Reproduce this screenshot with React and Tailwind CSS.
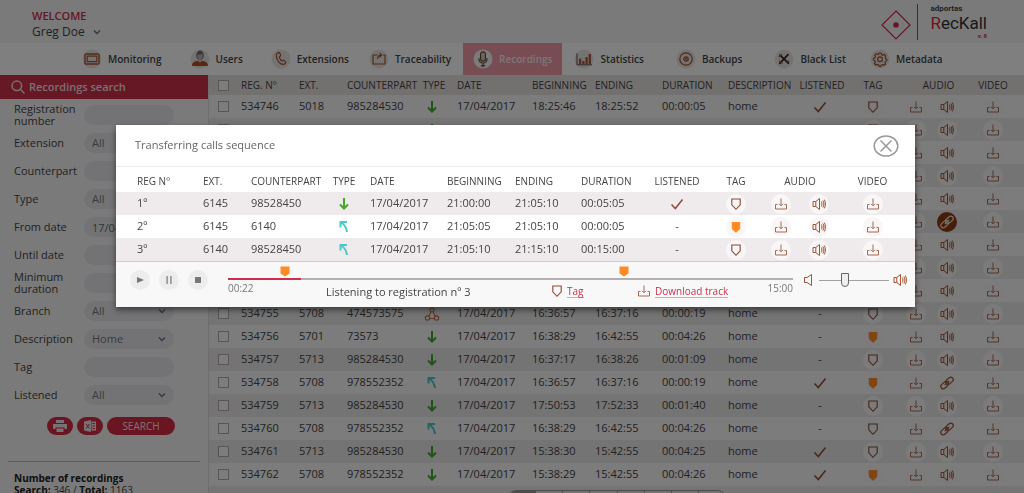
import React, { useState } from 'react';

const navItems = [
  { label: 'Monitoring', icon: 'monitor', space: '' },
  { label: 'Users', icon: 'user', space: 'ml-7' },
  { label: 'Extensions', icon: 'phone', space: 'ml-7' },
  { label: 'Traceability', icon: 'trace', space: 'ml-5' },
  { label: 'Recordings', icon: 'mic', space: 'ml-3', active: true },
  { label: 'Statistics', icon: 'stats', space: 'ml-3' },
  { label: 'Backups', icon: 'disc', space: 'ml-8' },
  { label: 'Black List', icon: 'blacklist', space: 'ml-8' },
  { label: 'Metadata', icon: 'gear', space: 'ml-6' },
];

const filters = [
  { id: 'registration', label: 'Registration number', type: 'text' },
  { id: 'extension', label: 'Extension', type: 'select', value: 'All' },
  { id: 'counterpart', label: 'Counterpart', type: 'text' },
  { id: 'type', label: 'Type', type: 'select', value: 'All' },
  { id: 'from', label: 'From date', type: 'text', value: '17/04/2017' },
  { id: 'until', label: 'Until date', type: 'text' },
  { id: 'duration', label: 'Minimum duration', type: 'text' },
  { id: 'branch', label: 'Branch', type: 'select', value: 'All' },
  { id: 'description', label: 'Description', type: 'select', value: 'Home' },
  { id: 'tag', label: 'Tag', type: 'text' },
  { id: 'listened', label: 'Listened', type: 'select', value: 'All' },
];

// reg, ext, counterpart, type, beginning, ending, duration, listened, tagged, audio
const recordings = [
  ['534746', '5018', '985284530', 'in', '18:25:46', '18:25:52', '00:00:05', true, false, 'speaker'],
  ['534747', '5708', '978552352', 'in', '16:36:57', '16:37:16', '00:00:19', false, false, 'speaker'],
  ['534748', '5713', '985284530', 'in', '17:50:53', '17:52:33', '00:01:40', false, false, 'speaker'],
  ['534749', '5708', '978552352', 'out', '16:38:29', '16:42:55', '00:04:26', false, false, 'speaker'],
  ['534750', '5713', '985284530', 'in', '15:38:30', '15:42:55', '00:04:25', false, false, 'speaker'],
  ['534751', '6145', '98528450', 'out', '21:00:00', '21:05:10', '00:05:05', true, false, 'active'],
  ['534752', '5701', '73573', 'in', '16:38:29', '16:42:55', '00:04:26', false, false, 'speaker'],
  ['534753', '5713', '985284530', 'in', '16:37:17', '16:38:26', '00:01:09', false, false, 'speaker'],
  ['534754', '5708', '978552352', 'out', '16:36:57', '16:37:16', '00:00:19', false, false, 'speaker'],
  ['534755', '5708', '474573575', 'group', '16:36:57', '16:37:16', '00:00:19', false, false, 'speaker'],
  ['534756', '5701', '73573', 'in', '16:38:29', '16:42:55', '00:04:26', false, true, 'speaker'],
  ['534757', '5713', '985284530', 'in', '16:37:17', '16:38:26', '00:01:09', false, false, 'speaker'],
  ['534758', '5708', '978552352', 'out', '16:36:57', '16:37:16', '00:00:19', true, true, 'link'],
  ['534759', '5713', '985284530', 'in', '17:50:53', '17:52:33', '00:01:40', false, false, 'speaker'],
  ['534760', '5708', '978552352', 'out', '16:38:29', '16:42:55', '00:04:26', false, false, 'link'],
  ['534761', '5713', '985284530', 'in', '15:38:30', '15:42:55', '00:04:25', true, false, 'speaker'],
  ['534762', '5708', '978552352', 'in', '15:38:29', '15:42:55', '00:04:26', true, true, 'speaker'],
];

const calls = [
  ['1º', '6145', '98528450', 'in', '21:00:00', '21:05:10', '00:05:05', true, false],
  ['2º', '6145', '6140', 'out', '21:05:05', '21:05:10', '00:00:05', false, true],
  ['3º', '6140', '98528450', 'out', '21:05:10', '21:15:10', '00:15:00', false, false],
];

const markers = [10, 70];

/* ---------- icons ---------- */

const NavIcon = ({ name }) => {
  const line = { fill: 'none', stroke: '#a4532f', strokeWidth: 1.2, strokeLinejoin: 'round', strokeLinecap: 'round' };
  return (
    <svg viewBox="0 0 20 20" className="h-5 w-5 shrink-0" aria-hidden="true">
      <circle cx="10" cy="10" r="9.5" fill={name === 'mic' ? '#f7f7f7' : '#ebe7e4'} />
      {name === 'monitor' && (
        <g {...line}>
          <rect x="3" y="5" width="14" height="10" rx="1" strokeWidth="1.4" />
          <rect x="5.2" y="7.2" width="9.6" height="5.4" />
        </g>
      )}
      {name === 'user' && (
        <g>
          <ellipse cx="10" cy="6.5" rx="3.8" ry="5" fill="#6f6e70" />
          <path d="M7.4 5.4c2 .6 4-.2 5.2-.8v3.6c0 2-1.2 3.2-2.6 3.2s-2.6-1.200-2.600-3.200z" fill="#b9b2ae" />
          <path d="M2 17c0-3.400 2.400-4.800 6-5.200l2 1.600 2-1.600c3.600.4 6 1.800 6 5.200z" fill="#b5501f" />
        </g>
      )}
      {name === 'phone' && (
        <path
          {...line}
          d="M6.300 4.300l1.500-.7c.5-.2.800 0 1 .5l.8 2c.2.5 0 .8-.4 1.100l-.9.7c.3 1.800 1.300 3.200 2.700 4.100l1-.6c.5-.3.9-.2 1.200.2l1.300 1.600c.3.4.3.8-.1 1.100l-1.200 1C9.600 16.200 5.200 11.500 5.300 6.200c0-.9.300-1.500 1-1.900z"
        />
      )}
      {name === 'trace' && (
        <g {...line}>
          <path d="M8 6H4v9h12V6h-1.500" />
          <path d="M8.500 9.500c.3-2.200 1.800-3.300 4-3.400M11 4.300l1.800 1.800L11 7.900" />
        </g>
      )}
      {name === 'mic' && (
        <g {...line} stroke="#6d4c35">
          <rect x="7.600" y="2.800" width="4.800" height="9.400" rx="2.400" fill="#d8d0c0" />
          <path d="M6 9.500c0 3 1.600 4.500 4 4.500s4-1.500 4-4.500M10 14v3" />
          <path d="M8.500 16.800h3" strokeWidth="1.600" />
        </g>
      )}
      {name === 'stats' && (
        <g stroke="#a4532f">
          <path d="M3 4.500v11.300h15" fill="none" stroke="#5b4a46" />
          <path d="M6.200 15V9.500M9.400 15v-3M12.600 15V8M15.800 15V5" strokeWidth="2.200" />
        </g>
      )}
      {name === 'disc' && (
        <g {...line}>
          <circle cx="10" cy="10" r="6.200" />
          <circle cx="10" cy="10" r="2.200" />
          <circle cx="10" cy="10" r=".5" />
        </g>
      )}
      {name === 'blacklist' && (
        <g fill="none" stroke="#2f2b2a" strokeLinecap="round">
          <path d="M6 6.200l8.300 8M14 5.600L5.800 14.400" strokeWidth="1.800" />
          <path d="M5.300 7.600l2.500-1.800M12.800 12.200l2 .3M5.600 12.200l2.500 1.800" stroke="#a4532f" strokeWidth="1.300" />
        </g>
      )}
      {name === 'gear' && (
        <g {...line}>
          <path d="M8.800 4h2.400l.4 1.600 1.300.6 1.500-.8 1.500 1.700-.7 1.400.4 1.200 1.300.5v1.600l-1.500.5-.5 1.200.7 1.500-1.700 1.300-1.300-.8-1.200.5-.5 1.300H9.200l-.6-1.400-1.200-.5-1.500.7-1.400-1.600.8-1.400-.5-1.200L3.500 11V9.300l1.400-.5.5-1.200-.7-1.400 1.600-1.400 1.400.8 1-.4z" />
          <circle cx="10" cy="10.200" r="2.400" />
        </g>
      )}
    </svg>
  );
};

const DownloadIcon = () => (
  <svg viewBox="0 0 14 14" className="h-3.5 w-3.5 shrink-0" fill="none" stroke="#a86a55" strokeWidth="1" aria-hidden="true">
    <path d="M3.500 7.500H1.500v4.500h11V7.500h-2M7 1.500v7M5 6.800l2 2 2-2" />
  </svg>
);

const SpeakerIcon = ({ muted }) => (
  <svg viewBox="0 0 14 14" className="h-3.5 w-3.5 shrink-0" fill="none" stroke="#a4532f" strokeWidth="1" aria-hidden="true">
    {muted ? (
      <path d="M3.500 4.500h2.500L10.500 1.500v11L6 9.500H3.500z" />
    ) : (
      <path d="M1 4.500h2.800L7.500 1.500v11L3.800 9.500H1zM3.800 4.500v5M9.300 4.500c.9 1.500.9 3.500 0 5M10.900 3.500c1.300 2.200 1.300 4.800 0 7M12.400 2.600c1.300 2.600 1.300 6.200 0 8.800" />
    )}
  </svg>
);

const LinkIcon = ({ color }) => (
  <svg viewBox="0 0 14 14" className="h-3.5 w-3.5 shrink-0" fill="none" stroke={color} strokeWidth="1.200" aria-hidden="true">
    <g transform="rotate(-42 7 7)">
      <rect x="-.5" y="4.600" width="8.500" height="4.800" rx="2.400" />
      <rect x="6" y="4.600" width="8.500" height="4.800" rx="2.400" />
      <path d="M4 7h6" />
    </g>
  </svg>
);

const TagIcon = ({ filled }) => (
  <svg
    viewBox="0 0 12 14"
    className="h-3.5 w-3 shrink-0"
    fill={filled ? '#ff8a24' : 'none'}
    stroke={filled ? '#ff8a24' : '#8e4634'}
    strokeWidth="1.100"
    aria-hidden="true"
  >
    {filled ? (
      <path d="M2.300 2.500h7.400v5.600c0 1.500-2.500 2.500-3.700 4-1.200-1.500-3.700-2.500-3.700-4z" />
    ) : (
      <path d="M1.800 2h8.400v5.800L6 12.300 1.800 7.800z" />
    )}
  </svg>
);

const TypeIcon = ({ type }) => (
  <svg viewBox="0 0 16 16" className="mx-auto h-4 w-4" fill="none" aria-hidden="true">
    {type === 'in' && <path d="M8 2v10.500M4 8.500l4 4 4-4" stroke="#47a42c" strokeWidth="2" />}
    {type === 'out' && (
      <path d="M4.500 8.500V3h6.500M5 3.500c3.500 2 5.500 5.500 6 9.500" stroke="#4cc8c8" strokeWidth="2" />
    )}
    {type === 'group' && (
      <g stroke="#c2714a" strokeWidth="1.200">
        <circle cx="8" cy="4" r="2" />
        <circle cx="3.500" cy="12" r="2.200" />
        <circle cx="12.500" cy="12" r="2.200" />
        <path d="M7 6l-2.500 4.200M9 6l2.500 4.200M5.700 12.500h4.600" />
      </g>
    )}
  </svg>
);

const CheckIcon = () => (
  <svg viewBox="0 0 14 14" className="mx-auto h-3.5 w-3.5" fill="none" stroke="#94483a" strokeWidth="1.500" aria-label="Yes">
    <path d="M1.500 7.500l3.800 4L12.500 2.500" />
  </svg>
);

const Chevron = ({ className }) => (
  <svg viewBox="0 0 8 8" className={className} fill="none" stroke="#5d7184" strokeWidth="1.300" aria-hidden="true">
    <path d="M1 2.500l3 3 3-3" />
  </svg>
);

const IconButton = ({ label, children, active }) => (
  <button
    type="button"
    aria-label={label}
    className={`mx-auto flex h-5 w-5 items-center justify-center rounded-full ${active ? 'bg-[#8c3a12]' : 'bg-[#f8f6f6]'}`}
  >
    {children}
  </button>
);

/* ---------- page ---------- */

const Header = () => (
  <header className="flex h-[43px] items-center justify-between bg-[#f4f4f4] pr-[37px] pl-8">
    <div className="pt-1">
      <p className="text-[11px] leading-4 font-semibold text-[#c9304a]">WELCOME</p>
      <button type="button" className="flex items-center gap-2 text-[12px] leading-4 text-[#444]">
        Greg Doe <Chevron className="h-2 w-2" />
      </button>
    </div>
    <div className="flex items-center">
      <svg viewBox="0 0 30 30" className="mt-1.5 h-[30px] w-[30px]" aria-hidden="true">
        <path d="M15 1l14 14-14 14L1 15z" fill="none" stroke="#cf2d4b" strokeWidth="1.200" />
        <circle cx="15" cy="15" r="2.800" fill="#cf2d4b" />
      </svg>
      <div className="ml-1.5 h-9 border-l border-[#cf2d4b]" />
      <div className="ml-3 flex flex-col font-['Roboto',sans-serif]">
        <span className="text-[8px] leading-[8px] font-bold text-[#444]">adportas</span>
        <span className="text-[17px] leading-5 text-[#333]">
          <span className="text-[#e02545]">R</span>ecKall
        </span>
        <span className="text-right text-[6px] leading-[6px] font-bold text-[#cf2d4b]">v. 8</span>
      </div>
    </div>
  </header>
);

const Nav = () => (
  <nav className="flex h-8 items-stretch bg-white pl-[82px]">
    {navItems.map((item) => (
      <a
        key={item.label}
        href="#"
        className={`flex items-center gap-1.5 text-[10px] font-semibold whitespace-nowrap ${item.space} ${
          item.active ? 'bg-[#ef9ba6] px-2.5 text-[#fbeaec]' : 'text-[#444]'
        }`}
      >
        <NavIcon name={item.icon} />
        {item.label}
      </a>
    ))}
  </nav>
);

const Sidebar = () => (
  <aside className="w-[209px] shrink-0 border-r border-[#dcdcdc] bg-[#f4f4f4]">
    <h2 className="flex h-6 items-center gap-1 bg-[#cc3349] pl-[11px] text-[11px] font-semibold text-[#f6dfe2]">
      <svg viewBox="0 0 14 14" className="h-3.5 w-3.5" fill="none" stroke="#f6dfe2" strokeWidth="1.500" aria-hidden="true">
        <circle cx="5.800" cy="5.800" r="4.800" />
        <path d="M9.300 9.300l4.200 4.200" />
      </svg>
      Recordings search
    </h2>
    <form className="pt-0.5" onSubmit={(e) => e.preventDefault()}>
      {filters.map((f) => (
        <div key={f.id} className="flex h-7 items-center pl-3.5">
          <label htmlFor={f.id} className="w-[70px] shrink-0 text-[11px] leading-3 text-[#444]">
            {f.label}
          </label>
          {f.type === 'select' ? (
            <div className="relative">
              <select
                id={f.id}
                defaultValue={f.value}
                className="block h-5 w-[90px] appearance-none rounded-full bg-[#e6e7eb] pl-2 text-[11px] text-[#777]"
              >
                <option>{f.value}</option>
              </select>
              <Chevron className="pointer-events-none absolute top-1.5 right-2 h-2 w-2" />
            </div>
          ) : (
            <input
              id={f.id}
              type="text"
              defaultValue={f.value}
              className="h-5 w-[90px] rounded-full bg-[#e6e7eb] px-2 text-[11px] text-[#666]"
            />
          )}
        </div>
      ))}
      <div className="mt-2 flex gap-1 pl-[47px]">
        <button type="button" aria-label="Print" className="flex h-[18px] w-[26px] items-center justify-center rounded-full bg-[#d42a44]">
          <svg viewBox="0 0 14 12" className="h-3 w-3.5" fill="#f3e3e5" aria-hidden="true">
            <path d="M3 0h8v3H3zM0 4h14v5h-2.500V7.500h-9V9H0zM3.500 8.500h7V12h-7z" />
          </svg>
        </button>
        <button type="button" aria-label="Export to Excel" className="flex h-[18px] w-[26px] items-center justify-center rounded-full bg-[#d42a44]">
          <svg viewBox="0 0 14 12" className="h-3 w-3.5" aria-hidden="true">
            <path d="M1 1.500L8 0v12l-7-1.500zM8.500 1.500H13v9H8.500z" fill="#f3e3e5" />
            <path d="M3 4l3.500 4.500M6.500 4L3 8.500M9.500 3.500H12M9.500 6H12M9.500 8.500H12" stroke="#d42a44" />
          </svg>
        </button>
        <button type="submit" className="h-[18px] w-[68px] rounded-full bg-[#d42a44] text-[10px] text-[#f6e4e6]">
          SEARCH
        </button>
      </div>
    </form>
    <div className="mx-2 mt-[26px] border-t border-[#b5b5b5] px-1.5 pt-2.5 text-[10px] leading-3 text-[#444]">
      <p className="font-bold text-[#222]">Number of recordings</p>
      <p>
        <b className="text-[#222]">Search:</b> 346 / <b className="text-[#222]">Total:</b> 1163
      </p>
    </div>
  </aside>
);

const Checkbox = ({ label }) => (
  <input type="checkbox" aria-label={label} className="ml-[9px] block h-[11px] w-[11px] appearance-none border border-[#b5a9a9] bg-[#fafafa]" />
);

const RecordingsTable = () => (
  <main className="min-w-0 flex-1 bg-[#ebe8e8]">
    <table className="w-full table-fixed text-left text-[11px] whitespace-nowrap text-[#444]">
      <colgroup>
        <col className="w-[32px]" />
        <col className="w-[58px]" />
        <col className="w-[48px]" />
        <col className="w-[68px]" />
        <col className="w-[34px]" />
        <col className="w-[83px]" />
        <col className="w-[63px]" />
        <col className="w-[67px]" />
        <col className="w-[66px]" />
        <col className="w-[65px]" />
        <col className="w-[54px]" />
        <col className="w-[52px]" />
        <col className="w-[33px]" />
        <col className="w-[30px]" />
        <col className="w-[62px]" />
      </colgroup>
      <thead>
        <tr className="h-5 bg-[#e6e0e1] text-[10px]">
          <th><Checkbox label="Select all" /></th>
          <th className="font-medium">REG. Nº</th>
          <th className="font-medium">EXT.</th>
          <th className="font-medium">COUNTERPART</th>
          <th className="pl-1 text-center font-medium">TYPE</th>
          <th className="pl-2 font-medium">DATE</th>
          <th className="font-medium">BEGINNING</th>
          <th className="font-medium">ENDING</th>
          <th className="font-medium">DURATION</th>
          <th className="font-medium">DESCRIPTION</th>
          <th className="pl-1 text-center font-medium">LISTENED</th>
          <th className="text-center font-medium">TAG</th>
          <th colSpan={2} className="pl-4 text-center font-medium">AUDIO</th>
          <th className="text-center font-medium">VIDEO</th>
        </tr>
      </thead>
      <tbody>
        {recordings.map(([reg, ext, counterpart, type, beginning, ending, duration, listened, tagged, audio]) => (
          <tr key={reg} className="h-[23px] odd:bg-[#f8f8f8] even:bg-[#ebe8e8]">
            <td><Checkbox label={`Select ${reg}`} /></td>
            <td>{reg}</td>
            <td>{ext}</td>
            <td>{counterpart}</td>
            <td><TypeIcon type={type} /></td>
            <td className="pl-2">17/04/2017</td>
            <td>{beginning}</td>
            <td>{ending}</td>
            <td>{duration}</td>
            <td>home</td>
            <td className="text-center">{listened ? <CheckIcon /> : '-'}</td>
            <td><IconButton label="Tag"><TagIcon filled={tagged} /></IconButton></td>
            <td><IconButton label="Download audio"><DownloadIcon /></IconButton></td>
            <td>
              <IconButton label="Listen" active={audio === 'active'}>
                {audio === 'speaker' ? <SpeakerIcon /> : <LinkIcon color={audio === 'active' ? '#f0e0d0' : '#9a5238'} />}
              </IconButton>
            </td>
            <td><IconButton label="Download video"><DownloadIcon /></IconButton></td>
          </tr>
        ))}
      </tbody>
    </table>
    <div className="mt-1 ml-[299px] flex w-[218px] overflow-hidden rounded-lg border border-[#999]">
      {[1, 2, 3, 4, 5, 6, 7, 8].map((page) => (
        <button
          key={page}
          type="button"
          aria-label={`Page ${page}`}
          className={`h-5 flex-1 border-l border-[#999] first:border-l-0 ${page === 1 ? 'bg-[#999]' : ''}`}
        />
      ))}
    </div>
  </main>
);

const Player = () => {
  const [volume, setVolume] = useState(35);

  return (
    <div className="flex h-[46px] border-t border-[#cfcccc] bg-[#f8f8f8] pl-3.5">
      <div className="flex gap-[9px] pt-2 text-[#777]">
        <button type="button" aria-label="Play" className="flex h-5 w-5 items-center justify-center rounded-full bg-[#ededed]">
          <svg viewBox="0 0 8 8" className="h-2 w-2" fill="currentColor"><path d="M1 1l7 3-7 3z" /></svg>
        </button>
        <button type="button" aria-label="Pause" className="flex h-5 w-5 items-center justify-center rounded-full bg-[#ededed]">
          <svg viewBox="0 0 8 8" className="h-2 w-2" fill="currentColor"><path d="M1.500 0h1.200v8H1.500zM5.300 0h1.200v8H5.300z" /></svg>
        </button>
        <button type="button" aria-label="Stop" className="flex h-5 w-5 items-center justify-center rounded-full bg-[#ededed]">
          <svg viewBox="0 0 8 8" className="h-2 w-2" fill="currentColor"><path d="M1 1h6v6H1z" /></svg>
        </button>
      </div>
      <div className="ml-5 flex-1 pt-4">
        <div className="relative">
          <progress
            value={13}
            max={100}
            aria-label="Playback position"
            className="block h-[2px] w-full appearance-none [&::-webkit-progress-bar]:bg-[#b5afb0] [&::-webkit-progress-value]:bg-[#cf2d4b]"
          />
          {markers.map((position) => (
            <svg
              key={position}
              viewBox="0 0 10 11"
              className="absolute -top-3 h-[11px] w-[10px] -translate-x-1/2"
              style={{ left: `${position}%` }}
              aria-hidden="true"
            >
              <path d="M.5.500h9v7L5 10.500.5 7.500z" fill="#ff8a24" />
            </svg>
          ))}
        </div>
        <div className="flex items-start text-[10px] leading-4 text-[#777]">
          <span className="w-[98px]">00:22</span>
          <span className="mt-1 w-[225px] text-[11px] whitespace-nowrap text-[#444]">Listening to registration nº 3</span>
          <a href="#" className="mt-1 flex w-[86px] items-center gap-1 text-[#c9304a]">
            <TagIcon />
            <span className="border-b border-[#e3a0ab] leading-3">Tag</span>
          </a>
          <a href="#" className="mt-1 flex items-center gap-1 whitespace-nowrap text-[#c9304a]">
            <DownloadIcon />
            <span className="border-b border-[#e3a0ab] leading-3">Download track</span>
          </a>
          <span className="ml-auto">15:00</span>
        </div>
      </div>
      <div className="flex h-9 items-center gap-1 pr-2 pl-2">
        <SpeakerIcon muted />
        <input
          type="range"
          aria-label="Volume"
          value={volume}
          onChange={(e) => setVolume(Number(e.target.value))}
          className="h-4 w-[70px] appearance-none bg-transparent [&::-webkit-slider-runnable-track]:h-px [&::-webkit-slider-runnable-track]:bg-[#a5a0a0] [&::-webkit-slider-thumb]:-mt-[7px] [&::-webkit-slider-thumb]:h-3.5 [&::-webkit-slider-thumb]:w-2 [&::-webkit-slider-thumb]:appearance-none [&::-webkit-slider-thumb]:rounded-b-md [&::-webkit-slider-thumb]:border [&::-webkit-slider-thumb]:border-[#666] [&::-webkit-slider-thumb]:bg-[#eee]"
        />
        <SpeakerIcon />
      </div>
    </div>
  );
};

const CallsModal = () => (
  <div className="fixed inset-0 bg-black/50 pt-[125px] pr-[109px] pl-[116px]">
    <section role="dialog" aria-label="Transferring calls sequence" className="bg-white shadow-[0_3px_6px_rgba(0,0,0,0.5)]">
      <div className="flex h-[42px] items-center justify-between border-b border-[#ececec] pr-4 pl-[19px]">
        <h2 className="text-[11px] text-[#666]">Transferring calls sequence</h2>
        <button type="button" aria-label="Close">
          <svg viewBox="0 0 26 22" className="h-[22px] w-[26px]" fill="none" stroke="#999">
            <ellipse cx="13" cy="11" rx="11.800" ry="10" strokeWidth="1.500" />
            <path d="M7.500 5.500l11 11M18.500 5.500l-11 11" strokeWidth="1.500" />
          </svg>
        </button>
      </div>
      <table className="w-full table-fixed text-left text-[11px] whitespace-nowrap text-[#444]">
        <colgroup>
          <col className="w-[87px]" />
          <col className="w-[48px]" />
          <col className="w-[71px]" />
          <col className="w-[44px]" />
          <col className="w-[81px]" />
          <col className="w-[68px]" />
          <col className="w-[66px]" />
          <col className="w-[63px]" />
          <col className="w-[66px]" />
          <col className="w-[52px]" />
          <col className="w-[38px]" />
          <col className="w-[38px]" />
          <col className="w-[77px]" />
        </colgroup>
        <thead>
          <tr className="h-[25px] text-[10px]">
            <th className="pt-1 pl-[21px] font-medium">REG Nº</th>
            <th className="pt-1 font-medium">EXT.</th>
            <th className="pt-1 font-medium">COUNTERPART</th>
            <th className="pt-1 text-center font-medium">TYPE</th>
            <th className="pt-1 pl-1 font-medium">DATE</th>
            <th className="pt-1 font-medium">BEGINNING</th>
            <th className="pt-1 font-medium">ENDING</th>
            <th className="pt-1 font-medium">DURATION</th>
            <th className="pt-1 text-center font-medium">LISTENED</th>
            <th className="pt-1 text-center font-medium">TAG</th>
            <th colSpan={2} className="pt-1 text-center font-medium">AUDIO</th>
            <th className="pt-1 pr-2 text-center font-medium">VIDEO</th>
          </tr>
        </thead>
        <tbody>
          {calls.map(([reg, ext, counterpart, type, beginning, ending, duration, listened, tagged]) => (
            <tr key={reg} className="h-[23px] odd:bg-[#efebec]">
              <td className="pl-[21px]">{reg}</td>
              <td>{ext}</td>
              <td>{counterpart}</td>
              <td><TypeIcon type={type} /></td>
              <td className="pl-1">17/04/2017</td>
              <td>{beginning}</td>
              <td>{ending}</td>
              <td>{duration}</td>
              <td className="text-center">{listened ? <CheckIcon /> : '-'}</td>
              <td><IconButton label="Tag"><TagIcon filled={tagged} /></IconButton></td>
              <td><IconButton label="Download audio"><DownloadIcon /></IconButton></td>
              <td><IconButton label="Listen"><SpeakerIcon /></IconButton></td>
              <td className="pr-2"><IconButton label="Download video"><DownloadIcon /></IconButton></td>
            </tr>
          ))}
        </tbody>
      </table>
      <Player />
    </section>
  </div>
);

const App = () => (
  <div className="flex h-screen flex-col overflow-hidden bg-white font-['Open_Sans',sans-serif]">
    <Header />
    <Nav />
    <div className="flex min-h-0 flex-1">
      <Sidebar />
      <RecordingsTable />
    </div>
    <CallsModal />
  </div>
);

export default App;
